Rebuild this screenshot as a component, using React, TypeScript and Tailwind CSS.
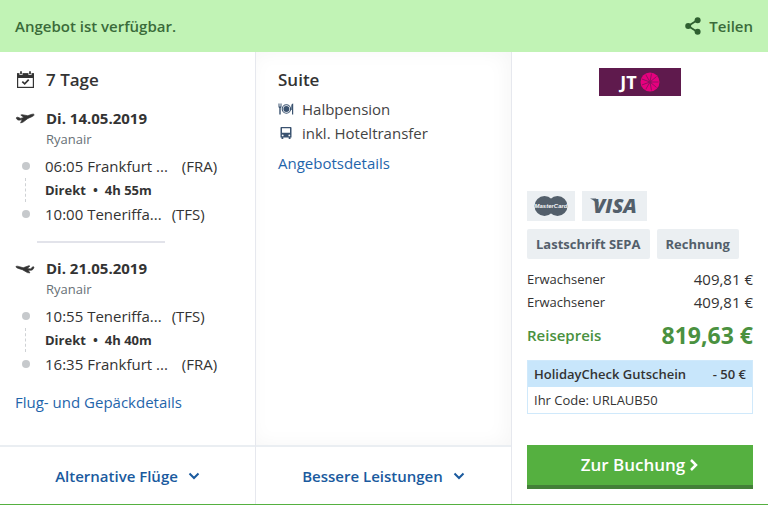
import { ReactNode } from "react";

interface FlightProps {
  date: string;
  icon: ReactNode;
  from: string;
  fromCode: string;
  to: string;
  toCode: string;
  duration: string;
}

function CalendarIcon() {
  return (
    <svg width="20" height="18" viewBox="0 0 20 18" fill="none" aria-hidden="true">
      <rect x="2.6" y="3" width="15.8" height="13.4" stroke="#333" strokeWidth="1.2" />
      <path d="M2 2.3h17v4.7H2z" fill="#333" />
      <path d="M6 0v4M15 0v4" stroke="#fff" strokeWidth="3" />
      <path d="M6 0.3v3M15 0.3v3" stroke="#333" strokeWidth="1.7" />
      <path d="M7.300 10.600l2.400 2.300 4-4.200" stroke="#333" strokeWidth="1.7" />
    </svg>
  );
}

function TakeoffIcon() {
  return (
    <svg width="20" height="12" viewBox="0 0 20 12" fill="#333" stroke="#333" strokeWidth="0.7" strokeLinejoin="round" aria-hidden="true">
      <path d="M1.500 5.500l1.300-.3 2.800 1.200 3.400-1L5.800 3.100l1.200-.4 5.800 1 3.400-1.200c1.500-.5 2.600-.5 2.900.1.200.7-.8 1.500-2.200 2.100l-4 1.700-4.800 3.700-2.500.8 1.600-3.300-2.500.5c-1.400.2-2.600-.4-3.200-1.400z" />
    </svg>
  );
}

function LandingIcon() {
  return (
    <svg width="20" height="12" viewBox="0 0 20 12" fill="#333" stroke="#333" strokeWidth="0.7" strokeLinejoin="round" aria-hidden="true">
      <path d="M19 5l-1.300-.2-2 2.100-3.500-.3 2.700-2.600-1.200-.2-5.500 2-3.700-1.100C2.400 4 1.200 4 1 4.600c-.2.700.9 1.300 2.300 1.800l4.100 1.300 5 2.900 2.500.3-1.700-2.700 2.500.1c1.500.1 2.800-1 3.300-3.300z" />
    </svg>
  );
}

function MealIcon() {
  return (
    <svg width="16" height="12" viewBox="0 0 16 12" aria-hidden="true">
      <path d="M.5.5v3.200c0 .8.4 1.100.8 1.300v6.500h1.400V5c.5-.2.8-.5.8-1.300V.5h-.7v3h-.5v-3h-.6v3h-.5v-3z" fill="#3b5370" />
      <path d="M15.200.5v11h-1.200V7h-.7V3c0-1.400.7-2.500 1.900-2.500z" fill="#3b5370" />
      <circle cx="8.400" cy="6" r="4.200" fill="none" stroke="#3b5370" strokeWidth="1.100" />
      <circle cx="8.400" cy="6" r="3" fill="#3b5370" />
    </svg>
  );
}

function BusIcon() {
  return (
    <svg width="16" height="14" viewBox="0 0 16 14" aria-hidden="true">
      <path
        d="M3.500 1h9c.6 0 1 .4 1 1v9.500h-1V13h-1.800v-1.500H5.300V13H3.500v-1.500h-1V2c0-.6.4-1 1-1zm.5 1.300v4.500h8V2.300zM4.700 8.500a.9.9 0 1 0 0 1.800.9.9 0 0 0 0-1.800zm6.600 0a.9.9 0 1 0 0 1.800.9.9 0 0 0 0-1.800z"
        fill="#3b5370"
        fillRule="evenodd"
      />
    </svg>
  );
}

function ShareIcon() {
  return (
    <svg width="16" height="18" viewBox="0 0 16 18" fill="#2f6030" aria-hidden="true">
      <path d="M12.500 3L3.200 9l9.300 6" fill="none" stroke="#2f6030" strokeWidth="1.800" />
      <circle cx="12.600" cy="3.200" r="3" />
      <circle cx="3.200" cy="9" r="3" />
      <circle cx="12.600" cy="14.800" r="3" />
    </svg>
  );
}

function ChevronDown() {
  return (
    <svg width="12" height="8" viewBox="0 0 12 8" fill="none" aria-hidden="true">
      <path d="M1.500 1.500L6 6l4.500-4.500" stroke="#1a5a9e" strokeWidth="2" />
    </svg>
  );
}

function JtLogo() {
  const spokes = [0, 40, 80, 120, 160, 200, 240, 280, 320];
  return (
    <div className="flex h-7 w-[82px] items-center justify-center gap-[3px] self-center bg-[#5f1a4d]">
      <span className="font-['Open_Sans'] text-lg leading-none font-bold text-white">JT</span>
      <svg width="20" height="20" viewBox="0 0 20 20" aria-hidden="true">
        <circle cx="10" cy="10" r="9.500" fill="#e6007e" />
        {spokes.map((angle) => (
          <path key={angle} d="M10 10V1.500" stroke="#8d1260" strokeWidth="0.9" transform={`rotate(${angle + 10} 10 10)`} />
        ))}
        <circle cx="10" cy="10" r="1.500" fill="#8d1260" />
      </svg>
    </div>
  );
}

function MasterCardLogo() {
  return (
    <svg width="34" height="20" viewBox="0 0 34 20" role="img" aria-label="MasterCard">
      <circle cx="10.500" cy="10" r="10" fill="#535f6b" />
      <circle cx="23.500" cy="10" r="10" fill="#535f6b" />
      <text x="17" y="12" textAnchor="middle" fill="#f4f6f8" fontFamily="Liberation Sans, sans-serif" fontSize="6" fontWeight="700" fontStyle="italic">
        MasterCard
      </text>
    </svg>
  );
}

function VisaLogo() {
  return (
    <svg width="54" height="28" viewBox="0 0 54 28" role="img" aria-label="VISA">
      <path d="M2 6.500h6l2.500 3.500v4C8.500 10.500 5.500 8 2 6.500z" fill="#535f6b" />
      <text x="5" y="21" fill="#535f6b" fontFamily="Open Sans, sans-serif" fontSize="20" fontWeight="800" fontStyle="italic">
        VISA
      </text>
    </svg>
  );
}

function Stop({ city, code }: { city: string; code: string }) {
  return (
    <div className="flex h-6 items-center">
      <span className="ml-[7px] size-2 rounded-full bg-[#c6c9cc]" />
      <span className="ml-[15px] whitespace-pre">{city}</span>
      <span className="ml-2.5">{code}</span>
    </div>
  );
}

function Flight({ date, icon, from, fromCode, to, toCode, duration }: FlightProps) {
  return (
    <div>
      <div className="flex h-6 items-center gap-[11px]">
        {icon}
        <h3 className="font-bold">{date}</h3>
      </div>
      <p className="mb-1.5 pl-[31px] text-[13px] leading-[18px] text-[#676f76]">Ryanair</p>
      <Stop city={from} code={fromCode} />
      <div className="flex h-6 items-center text-[13px] font-bold">
        <span className="ml-2.5 h-full border-l border-dashed border-[#cfd2d5]" />
        <span className="ml-[19px]">Direkt</span>
        <span className="mx-[7px]">•</span>
        <span>{duration}</span>
      </div>
      <Stop city={to} code={toCode} />
    </div>
  );
}

export default function App() {
  return (
    <div className="flex min-h-screen flex-col border-b border-[#55b040] bg-white font-['Open_Sans',sans-serif] text-[15px] leading-6 text-[#333]">
      <header className="flex h-[52px] items-center justify-between bg-[#c1f3b5] px-[15px] font-semibold text-[#3a6b3a]">
        <p>Angebot ist verfügbar.</p>
        <button className="flex items-center gap-2">
          <ShareIcon />
          Teilen
        </button>
      </header>

      <main className="grid grow grid-cols-3">
        <section className="flex flex-col border-r border-[#e6e8ee]">
          <div className="grow px-[15px] pt-4 pb-[31px]">
            <div className="mb-3.5 flex h-6 items-center gap-[11px]">
              <CalendarIcon />
              <h2 className="text-[17px] font-semibold">7 Tage</h2>
            </div>
            <Flight
              date="Di. 14.05.2019"
              icon={<TakeoffIcon />}
              from="06:05 Frankfurt ... "
              fromCode="(FRA)"
              to="10:00 Teneriffa..."
              toCode="(TFS)"
              duration="4h 55m"
            />
            <hr className="mt-[15px] mb-[13px] ml-[22px] w-32 border-t-2 border-[#e2e3ea]" />
            <Flight
              date="Di. 21.05.2019"
              icon={<LandingIcon />}
              from="10:55 Teneriffa..."
              fromCode="(TFS)"
              to="16:35 Frankfurt ... "
              toCode="(FRA)"
              duration="4h 40m"
            />
            <a href="#flug" className="mt-3.5 block text-[#1f65ab]">
              Flug- und Gepäckdetails
            </a>
          </div>
          <button className="flex h-[59px] items-center justify-center gap-2.5 border-t-2 border-[#eaeef2] font-semibold text-[#1a5a9e]">
            Alternative Flüge
            <ChevronDown />
          </button>
        </section>

        <section className="flex flex-col border-r border-[#e6e8ee]">
          <div className="grow px-[22px] pt-4 shadow-[inset_-4px_0_20px_rgba(0,0,0,0.04)]">
            <h2 className="mb-[5px] text-[17px] leading-6 font-semibold">Suite</h2>
            <ul className="text-[#444]">
              <li className="flex h-6 items-center gap-2">
                <MealIcon />
                Halbpension
              </li>
              <li className="flex h-6 items-center gap-2">
                <BusIcon />
                inkl. Hoteltransfer
              </li>
            </ul>
            <a href="#angebot" className="mt-1.5 block text-[#1f65ab]">
              Angebotsdetails
            </a>
          </div>
          <button className="flex h-[59px] items-center justify-center gap-2.5 border-t-2 border-[#eaeef2] font-semibold text-[#1a5a9e]">
            Bessere Leistungen
            <ChevronDown />
          </button>
        </section>

        <section className="flex flex-col px-[15px] pt-4 pb-[15px]">
          <JtLogo />
          <div className="mt-auto flex gap-[7px]">
            <span className="flex h-[30px] w-12 items-center justify-center bg-[#ebeff2]">
              <MasterCardLogo />
            </span>
            <span className="flex h-[30px] w-[65px] items-center justify-center bg-[#ebeff2]">
              <VisaLogo />
            </span>
          </div>
          <div className="mt-2 flex gap-[7px] text-[13px] font-bold whitespace-nowrap text-[#535f6b]">
            <span className="flex h-[30px] items-center rounded-xs bg-[#ebeff2] px-[9px]">Lastschrift SEPA</span>
            <span className="flex h-[30px] items-center rounded-xs bg-[#ebeff2] px-[9px]">Rechnung</span>
          </div>
          <dl className="mt-2">
            <div className="flex h-[23px] items-center justify-between">
              <dt className="text-[13px]">Erwachsener</dt>
              <dd>409,81 €</dd>
            </div>
            <div className="flex h-[23px] items-center justify-between">
              <dt className="text-[13px]">Erwachsener</dt>
              <dd>409,81 €</dd>
            </div>
            <div className="mt-1.5 flex h-8 items-center justify-between text-[#4a9140]">
              <dt className="font-semibold">Reisepreis</dt>
              <dd className="text-[23px] leading-8 font-bold">819,63 €</dd>
            </div>
          </dl>
          <div className="mt-[9px] border border-[#d0e9fb] text-[13px]">
            <div className="flex h-[26px] items-center justify-between bg-[#c8e6fb] px-1.5 font-semibold">
              <span>HolidayCheck Gutschein</span>
              <span>- 50 €</span>
            </div>
            <p className="px-1.5 leading-[26px]">Ihr Code: URLAUB50</p>
          </div>
          <button className="mt-[31px] flex h-11 items-center justify-center gap-1 border-b-4 border-[#438038] bg-[#55b040] text-[17px] font-semibold text-white">
            Zur Buchung
            <svg width="10" height="14" viewBox="0 0 10 14" fill="none" aria-hidden="true">
              <path d="M2 2l5 5-5 5" stroke="#fff" strokeWidth="2.500" />
            </svg>
          </button>
        </section>
      </main>
    </div>
  );
}
